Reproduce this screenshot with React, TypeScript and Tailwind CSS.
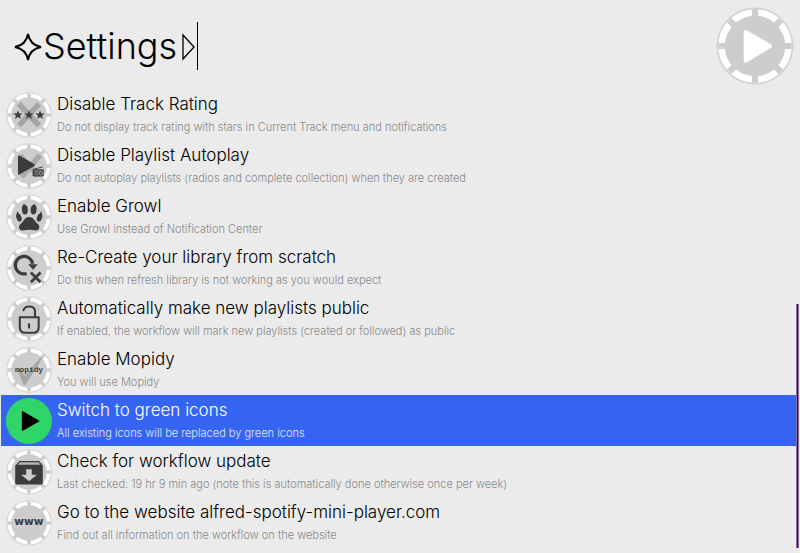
import React from "react";

type IconName = "stars" | "autoplay" | "paw" | "recreate" | "lock" | "mopidy" | "green" | "update" | "www";

const rows: { icon: IconName; title: string; subtitle: string; selected?: boolean }[] = [
  { icon: "stars", title: "Disable Track Rating", subtitle: "Do not display track rating with stars in Current Track menu and notifications" },
  { icon: "autoplay", title: "Disable Playlist Autoplay", subtitle: "Do not autoplay playlists (radios and complete collection) when they are created" },
  { icon: "paw", title: "Enable Growl", subtitle: "Use Growl instead of Notification Center" },
  { icon: "recreate", title: "Re-Create your library from scratch", subtitle: "Do this when refresh library is not working as you would expect" },
  { icon: "lock", title: "Automatically make new playlists public", subtitle: "If enabled, the workflow will mark new playlists (created or followed) as public" },
  { icon: "mopidy", title: "Enable Mopidy", subtitle: "You will use Mopidy" },
  { icon: "green", title: "Switch to green icons", subtitle: "All existing icons will be replaced by green icons", selected: true },
  { icon: "update", title: "Check for workflow update", subtitle: "Last checked: 19 hr 9 min ago (note this is automatically done otherwise once per week)" },
  { icon: "www", title: "Go to the website alfred-spotify-mini-player.com", subtitle: "Find out all information on the workflow on the website" },
];

/* Casino-chip disc: a white band cut into eight dashes by four bars through the centre. */
function Chip() {
  return (
    <>
      <circle cx="50" cy="50" r="49" fill="#cdcdcd" stroke="#d6d6d6" />
      <circle cx="50" cy="50" r="43" fill="none" stroke="#ffffff" strokeWidth="8.5" />
      <path d="M50 3 V97 M3 50 H97 M17 17 L83 83 M83 17 L17 83" stroke="#cdcdcd" strokeWidth="8" />
    </>
  );
}

function Star({ x }: { x: number }) {
  return (
    <path
      transform={`translate(${x} 50)`}
      d="M0-10 L2.8-3.2 L10-3 L4.4 1.6 L6.4 8.8 L0 4.6 L-6.4 8.8 L-4.4 1.6 L-10-3 L-2.8-3.2 Z"
      fill="#3c3c3c"
    />
  );
}

function Glyph({ name }: { name: IconName }) {
  switch (name) {
    case "stars":
      return (
        <>
          <path d="M28 26 L72 73 M72 26 L28 73" stroke="#a6a6a6" strokeWidth="12" />
          <Star x={26} />
          <Star x={50} />
          <Star x={74} />
        </>
      );
    case "autoplay":
      return (
        <>
          <path d="M30 27 L70 71 M74 26 L34 74" stroke="#a9a9a9" strokeWidth="12" />
          <path d="M28 29 L61 48 L28 67 Z" fill="#3c3c3c" stroke="#3c3c3c" strokeWidth="4" strokeLinejoin="round" />
          <path d="M60 57 L80 52" stroke="#3c3c3c" strokeWidth="2" />
          <rect x="58" y="57" width="24" height="16" rx="3" fill="#3c3c3c" />
          <circle cx="76" cy="66" r="3.5" fill="none" stroke="#cdcdcd" strokeWidth="1.5" />
          <path d="M61 61 H78 M62 65 H70 M62 69 H71" stroke="#bdbdbd" strokeWidth="1.3" />
        </>
      );
    case "paw":
      return (
        <g fill="#3c3c3c">
          <ellipse cx="41" cy="34" rx="6.5" ry="10.5" transform="rotate(-6 41 34)" />
          <ellipse cx="60" cy="34" rx="6.5" ry="10.5" transform="rotate(6 60 34)" />
          <ellipse cx="28" cy="51" rx="5.5" ry="9" transform="rotate(-18 28 51)" />
          <ellipse cx="73" cy="51" rx="5.5" ry="9" transform="rotate(18 73 51)" />
          <path d="M39 20 L37 26 L42 26 Z M62 20 L64 26 L59 26 Z M24 37 L23 46 L28 43 Z M77 37 L78 46 L73 43 Z" />
          <path d="M50 50 C61 50 62 60 70 66 C76 73 70 82 62 79 Q50 76 39 79 C30 82 25 73 31 66 C39 60 40 50 50 50 Z" />
        </g>
      );
    case "recreate":
      return (
        <g fill="none" stroke="#3c3c3c" strokeWidth="7">
          <path d="M45 62 A19 19 0 1 1 58 41" />
          <path d="M48 42 H69 L59 54 Z" fill="#3c3c3c" stroke="none" />
          <path d="M54 60 L75 81 M75 60 L54 81" strokeWidth="6" />
        </g>
      );
    case "lock":
      return (
        <g fill="none" stroke="#3c3c3c" strokeWidth="4.5" strokeLinecap="round">
          <path d="M30 46 H71 V68 Q71 80 59 80 H42 Q30 80 30 68 Z" strokeLinejoin="round" />
          <path d="M38 31 C42 20 62 20 63 33 V45" />
          <path d="M50 61 V69" />
        </g>
      );
    case "mopidy":
      return (
        <>
          <path d="M25 51 L31 49 L41 63 L74 24 L80 22 L43 82 L38 82 Z" fill="#a6a6a6" />
          <text x="50" y="54" textAnchor="middle" fontSize="17" fontWeight="700" fill="#3c3c3c" className="font-['Liberation_Mono',monospace]">
            mopidy
          </text>
        </>
      );
    case "update":
      return (
        <>
          <path d="M29 26 H72 L80 36 V74 Q80 77 77 77 H23 Q20 77 20 74 V36 Z" fill="#3c3c3c" />
          <path d="M30 29 H71 L75 34 H25 Z" fill="#b4b4b4" />
          <path d="M44 44 H56 V56 H67 L50 70 L33 56 H44 Z" fill="#cdcdcd" />
        </>
      );
    case "www":
      return (
        <text x="50" y="54" textAnchor="middle" fontSize="23" fontWeight="700" fill="#3c3c3c" className="font-['DejaVu_Sans',sans-serif]">
          www
        </text>
      );
    default:
      return null;
  }
}

function RowIcon({ name }: { name: IconName }) {
  return (
    <svg viewBox="0 0 100 100" className="size-[46px] shrink-0" aria-hidden="true">
      {name === "green" ? (
        <>
          <circle cx="50" cy="50" r="50" fill="#2fd566" />
          <path d="M36 30 L71 50 L36 70 Z" fill="#000000" stroke="#000000" strokeWidth="3" strokeLinejoin="round" />
        </>
      ) : (
        <>
          <Chip />
          <Glyph name={name} />
        </>
      )}
    </svg>
  );
}

export default function App() {
  return (
    <main className="min-h-screen bg-[#ebebeb] pl-px font-['Inter','Liberation_Sans',sans-serif] font-light text-black">
      <header className="flex h-[89px] items-center justify-between pt-0.5 pr-[6px] pl-3">
        <div className="flex items-center">
          <svg viewBox="0 0 30 30" className="size-[30px] shrink-0" fill="none" stroke="#000000" strokeWidth="2" aria-hidden="true">
            <path d="M15 3 Q17 14 28 16 Q17 18 15 29 Q13 18 2 16 Q13 14 15 3 Z" strokeLinejoin="miter" />
          </svg>
          <input
            type="text"
            aria-label="Search"
            defaultValue="Settings"
            className="field-sizing-content h-14 bg-transparent text-[36px] leading-[48px] outline-none"
          />
          <svg viewBox="0 0 20 30" className="h-[30px] w-5 shrink-0" fill="none" stroke="#000000" strokeWidth="1.3" aria-hidden="true">
            <path d="M6 4 V28 L17 16 Z" />
          </svg>
          <span className="h-12 w-px bg-black" aria-hidden="true" />
        </div>
        <svg viewBox="0 0 100 100" className="size-[78px] shrink-0" aria-hidden="true">
          <Chip />
          <path d="M38 32 L69 50 L38 69 Z" fill="#ffffff" stroke="#ffffff" strokeWidth="5" strokeLinejoin="round" />
        </svg>
      </header>
      <div className="flex pr-px">
        <ul className="min-w-0 flex-1">
          {rows.map((row) => (
            <li key={row.title}>
              <button
                type="button"
                className={`flex h-[51px] w-full items-center gap-[5px] pl-[5px] text-left ${row.selected ? "bg-[#3664f2] text-white" : ""}`}
              >
                <RowIcon name={row.icon} />
                <span className="flex min-w-0 flex-col gap-px whitespace-nowrap">
                  <span className="text-[17px] leading-6">{row.title}</span>
                  <span className={`text-[11px] leading-5 ${row.selected ? "text-[#e1e8fd]" : "text-[#8a8a8a]"}`}>{row.subtitle}</span>
                </span>
              </button>
            </li>
          ))}
        </ul>
        <div className="mt-[215px] w-[3px] border-x border-[#8a6a9c] bg-[#35104f]" aria-hidden="true" />
      </div>
    </main>
  );
}
